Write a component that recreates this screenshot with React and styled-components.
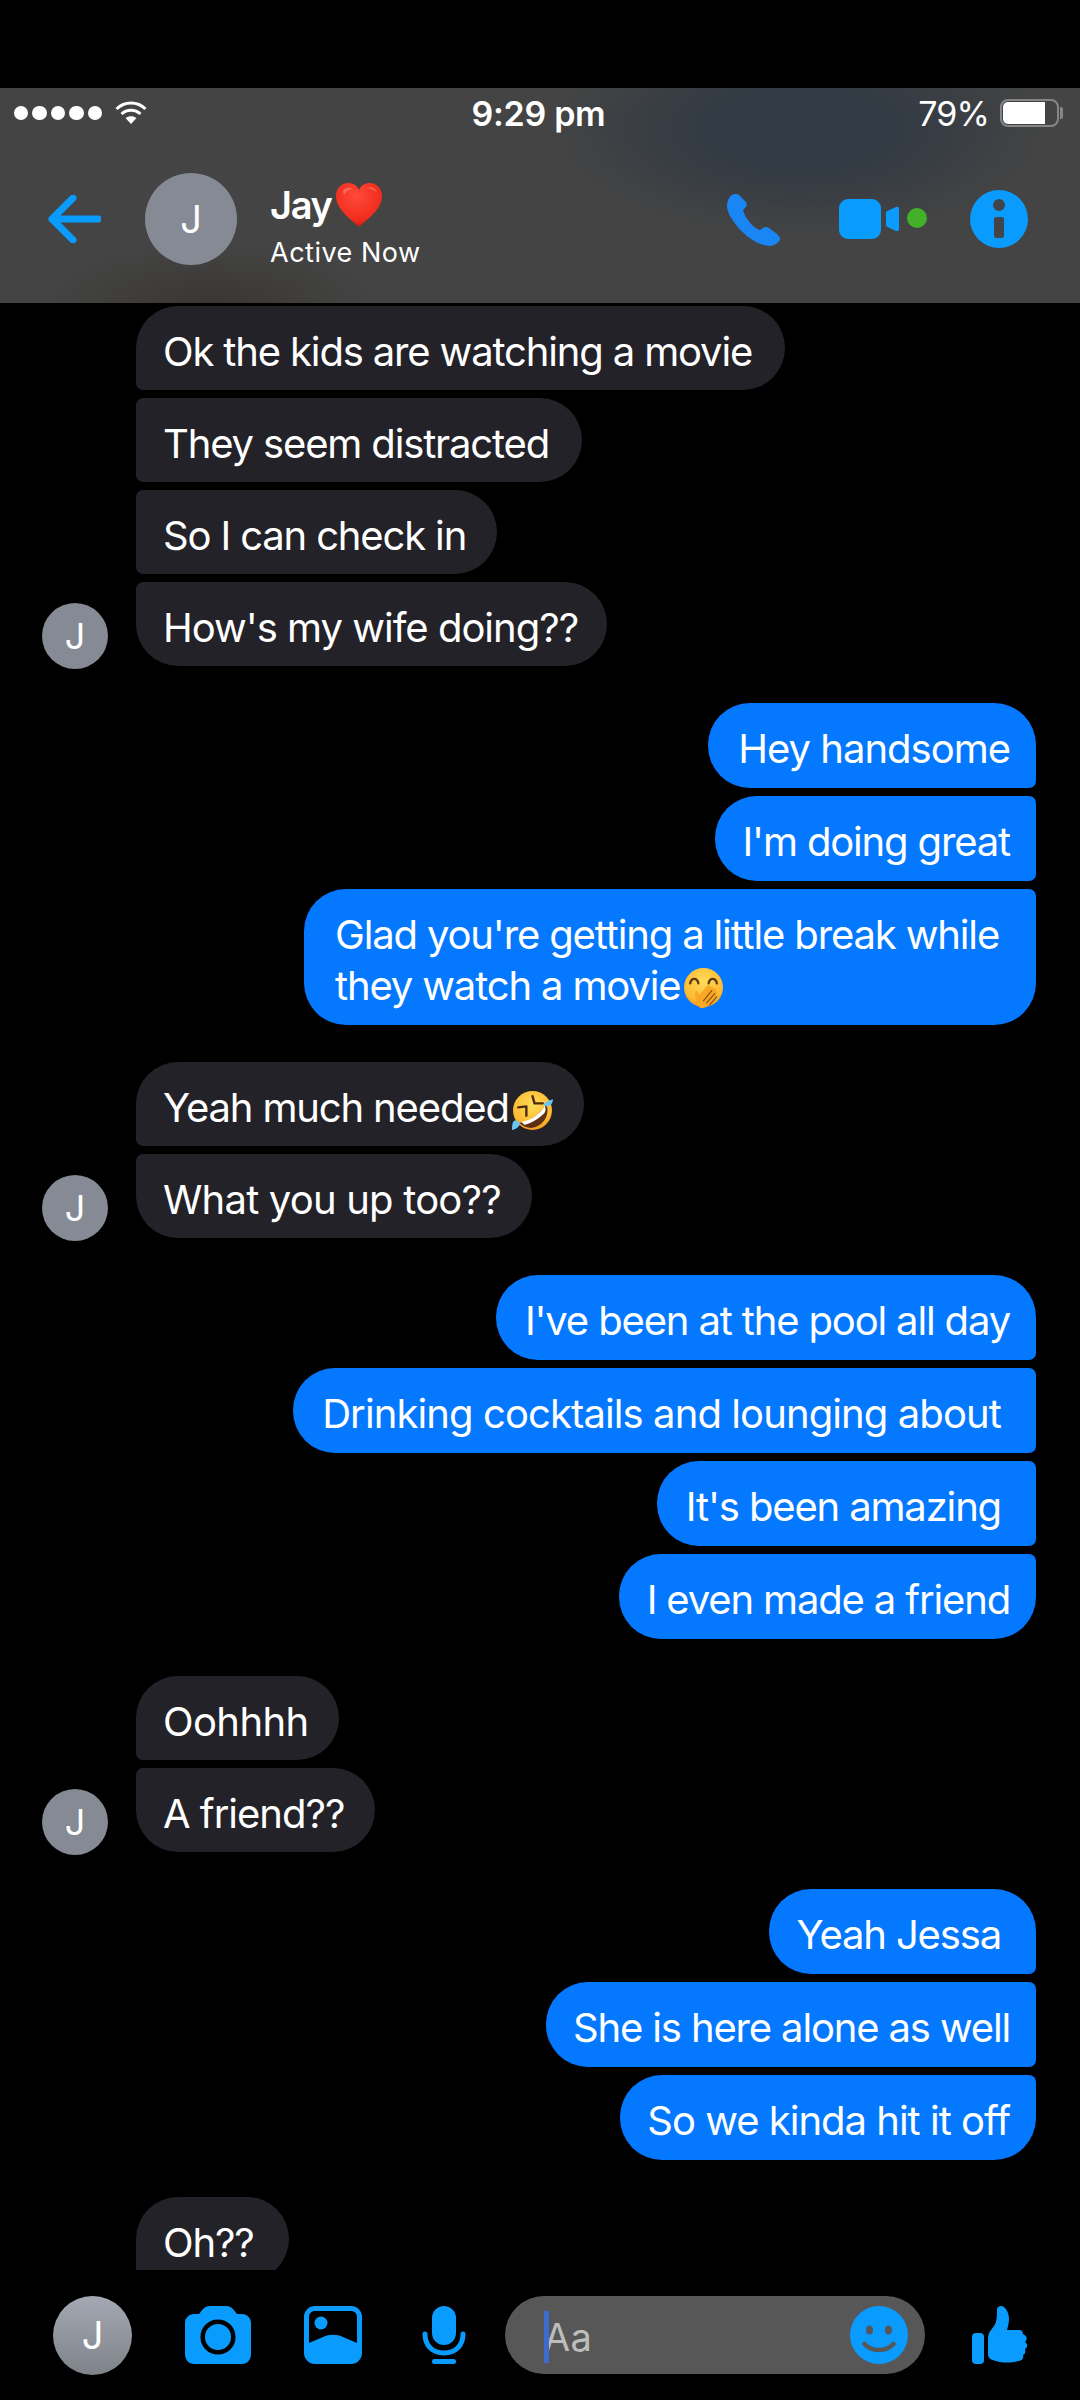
import React from "react";
import styled, { createGlobalStyle, css } from "styled-components";

const BLUE = "#0a9bff";

const GlobalStyle = createGlobalStyle`
  html, body {
    margin: 0;
    padding: 0;
    background: #000;
  }
  body {
    font-family: Inter, "Liberation Sans", sans-serif;
    color: #fff;
  }
`;

const Page = styled.div`
  width: 1080px;
  height: 2400px;
  padding-top: 88px;
  box-sizing: border-box;
  background: #000;
  overflow: hidden;
  display: flex;
  flex-direction: column;
`;

const Header = styled.header`
  height: 215px;
  flex-shrink: 0;
  background:
    radial-gradient(ellipse 250px 110px at 800px 40px, #323a43 0%, #323a43 35%, rgba(50, 58, 67, 0) 100%),
    radial-gradient(ellipse 170px 60px at 210px 215px, #393733 0%, rgba(57, 55, 51, 0) 100%),
    #444444;
`;

const StatusBar = styled.div`
  height: 50px;
  padding: 0 21px 0 14px;
  display: flex;
  align-items: center;
  font-size: 34px;
  letter-spacing: -0.9px;
`;

const StatusSide = styled.div`
  flex: 1;
  display: flex;
  align-items: center;
  justify-content: ${(p) => (p.$end ? "flex-end" : "flex-start")};
`;

const Time = styled.div`
  margin-left: 4px;
  font-weight: 600;
  letter-spacing: -0.3px;
`;

const Dots = styled.div`
  display: flex;
  gap: 4px;
  margin-right: 13px;
`;

const Dot = styled.span`
  width: 14.4px;
  height: 14.4px;
  border-radius: 50%;
  background: #fff;
`;

const Battery = styled.div`
  width: 59px;
  height: 28px;
  margin-left: 11px;
  padding: 1px;
  box-sizing: border-box;
  border: 2px solid #868686;
  border-radius: 8px;
  position: relative;

  &::after {
    content: "";
    position: absolute;
    right: -6px;
    top: 6px;
    width: 3px;
    height: 12px;
    background: #868686;
    border-radius: 0 2px 2px 0;
  }
`;

const BatteryFill = styled.div`
  height: 100%;
  background: #fff;
  border-radius: 5px 0 0 5px;
`;

const NavRow = styled.div`
  height: 162px;
  padding: 0 52px 3px 48px;
  display: flex;
  align-items: center;
`;

const BackIcon = styled.svg`
  width: 53px;
  height: 48px;
  margin-right: 44px;
`;

const Avatar = styled.div`
  width: ${(p) => p.$size}px;
  height: ${(p) => p.$size}px;
  border-radius: 50%;
  flex-shrink: 0;
  display: flex;
  align-items: center;
  justify-content: center;
  font-size: ${(p) => (p.$size > 70 ? 38 : 36)}px;
  font-weight: 400;
  color: #fff;
  background: ${(p) => (p.$gradient ? "linear-gradient(#a5a9b3, #7e8289)" : "#868a94")};
`;

const NameColumn = styled.div`
  margin-left: 33px;
  padding-top: 12px;
  display: flex;
  flex-direction: column;
`;

const NameLine = styled.div`
  height: 46px;
  display: flex;
  align-items: center;
  font-size: 38px;
  font-weight: 600;
  letter-spacing: -1.3px;
`;

const HeartIcon = styled.svg`
  width: 48px;
  height: 46px;
  margin-left: 3px;
`;

const ActiveNow = styled.div`
  margin-top: 10px;
  font-size: 27px;
  line-height: 30px;
  letter-spacing: 0.5px;
`;

const Actions = styled.div`
  margin-left: auto;
  display: flex;
  align-items: center;
  gap: 43px;
`;

const PhoneIcon = styled.svg`
  width: 53px;
  height: 53px;
  margin-right: 16px;
`;

const VideoIcon = styled.svg`
  width: 88px;
  height: 40px;
`;

const InfoIcon = styled.svg`
  width: 58px;
  height: 58px;
`;

const Messages = styled.main`
  flex: 1;
  min-height: 0;
  overflow: hidden;
  padding-top: 3px;
  display: flex;
  flex-direction: column;
  gap: 37px;
`;

const Group = styled.section`
  flex-shrink: 0;
  display: flex;
  align-items: flex-end;
  padding: ${(p) => (p.$sent ? "0 44px 0 0" : "0 0 0 42px")};
  justify-content: ${(p) => (p.$sent ? "flex-end" : "flex-start")};
`;

const AvatarSlot = styled.div`
  width: 66px;
  margin: 0 28px -3px 0;
  flex-shrink: 0;
`;

const Stack = styled.div`
  display: flex;
  flex-direction: column;
  gap: 8px;
  align-items: ${(p) => (p.$sent ? "flex-end" : "flex-start")};
`;

const BIG = 42;
const SMALL = 7;

// the corners that face the neighbour bubble in a group stay tight
const corners = ({ $sent, $pos }) => {
  const top = $pos === "first" ? BIG : SMALL;
  const bottom = $pos === "last" ? BIG : SMALL;
  return $sent
    ? css`border-radius: ${BIG}px ${top}px ${bottom}px ${BIG}px;`
    : css`border-radius: ${top}px ${BIG}px ${BIG}px ${bottom}px;`;
};

const Bubble = styled.div`
  width: ${(p) => p.$w}px;
  box-sizing: border-box;
  padding: 20px ${(p) => p.$pr || 26}px ${(p) => (p.$sent ? 14 : 13)}px ${(p) => p.$pl || 27}px;
  background: ${(p) => (p.$sent ? "#0479ff" : "#232228")};
  font-size: 40px;
  line-height: 51px;
  letter-spacing: ${(p) => p.$ls || -1.15}px;
  white-space: pre;
  text-align: ${(p) => (p.$sent && !p.$pl ? "right" : "left")};
  ${corners}
`;

const EmojiIcon = styled.svg`
  width: 41px;
  height: 41px;
  vertical-align: -9px;
  margin-left: 3px;
`;

const BottomBar = styled.footer`
  height: 130px;
  flex-shrink: 0;
  padding-left: 53px;
  display: flex;
  align-items: center;
`;

const BarIcon = styled.svg`
  height: 58px;
  flex-shrink: 0;
  margin-left: ${(p) => p.$ml}px;
  width: ${(p) => p.$w}px;
`;

const InputPill = styled.div`
  width: 420px;
  height: 78px;
  margin-left: 39px;
  padding: 3px 17px 0 39px;
  box-sizing: border-box;
  border-radius: 39px;
  background: #575757;
  display: flex;
  align-items: center;
`;

const Placeholder = styled.div`
  position: relative;
  font-size: 38px;
  letter-spacing: 0.2px;
  color: #bdbdbd;

  &::before {
    content: "";
    position: absolute;
    left: 0;
    top: -3px;
    width: 5px;
    height: 52px;
    background: #3e6bd0;
  }
`;

const SmileIcon = styled.svg`
  width: 58px;
  height: 58px;
  margin: -3px 0 0 auto;
`;

function Heart() {
  return (
    <HeartIcon viewBox="0 0 48 46">
      <defs>
        <radialGradient id="heartFill" cx="0.45" cy="0.3" r="0.8">
          <stop offset="0" stopColor="#ff4a3a" />
          <stop offset="0.7" stopColor="#f02b1c" />
          <stop offset="1" stopColor="#a80f0a" />
        </radialGradient>
      </defs>
      <path
        d="M24 45C17 38 1 28 1 14C1 6 7 1 13 1C18 1 22 3 24 8C26 3 30 1 35 1C41 1 47 6 47 14C47 28 31 38 24 45Z"
        fill="url(#heartFill)"
      />
      <path d="M8 9C10 5 15 5 18 7C14 7 11 9 9 13Z" fill="#ff8f80" opacity="0.55" />
      <path d="M32 6C36 4 41 6 42 10C39 8 36 7 32 6Z" fill="#ff8f80" opacity="0.45" />
    </HeartIcon>
  );
}

function HandFace() {
  return (
    <EmojiIcon viewBox="0 0 40 40">
      <defs>
        <radialGradient id="faceFill" cx="0.5" cy="0.35" r="0.7">
          <stop offset="0" stopColor="#ffdc5a" />
          <stop offset="0.75" stopColor="#fdb92f" />
          <stop offset="1" stopColor="#f08c1a" />
        </radialGradient>
      </defs>
      <circle cx="20" cy="19" r="19" fill="url(#faceFill)" />
      <path d="M7 15C8 9 14 9 15 15M25 15C26 9 32 9 33 15" fill="none" stroke="#5b3810" strokeWidth="2.2" strokeLinecap="round" />
      <path
        d="M12 27C11 23 13 21 14 23L16 26L23 18C25 16 27 17 26 19C28 17 30 18 29 20C31 19 33 20 32 22C33 22 34 24 33 25C30 31 26 37 20 39C15 40 12 34 12 27Z"
        fill="#f9a825"
      />
      <path d="M20 32L28 22M23 34L31 25M26 36L33 28" fill="none" stroke="#8c5310" strokeWidth="1.2" strokeLinecap="round" />
    </EmojiIcon>
  );
}

function LaughFace() {
  return (
    <EmojiIcon viewBox="0 0 40 40">
      <defs>
        <radialGradient id="laughFill" cx="0.5" cy="0.35" r="0.7">
          <stop offset="0" stopColor="#ffdc5a" />
          <stop offset="0.75" stopColor="#fdb92f" />
          <stop offset="1" stopColor="#ef8a1a" />
        </radialGradient>
      </defs>
      <circle cx="20" cy="20" r="19" fill="url(#laughFill)" />
      <path d="M6 17L14 16L14 25M20 6L22 13L30 13" fill="none" stroke="#4a2c0c" strokeWidth="2.3" strokeLinecap="round" strokeLinejoin="round" />
      <path d="M7 32C17 32 30 22 33 13C38 23 31 36 19 37C14 37 10 35 7 32Z" fill="#5e2f12" />
      <path d="M9 31C18 30 28 23 32 15C33 18 33 20 32 22C27 28 18 33 12 34Z" fill="#fff" />
      <path d="M31 14C33 11 37 10 40 9C40 13 37 16 34 16C32 16 31 15 31 14Z" fill="#6cc4f2" />
      <path d="M2 30C4 29 7 31 8 33C7 36 3 39 0 39C0 36 0 32 2 30Z" fill="#6cc4f2" />
    </EmojiIcon>
  );
}

const conversation = [
  {
    avatar: true,
    items: [
      { text: "Ok the kids are watching a movie", w: 649 },
      { text: "They seem distracted", w: 446 },
      { text: "So I can check in", w: 361 },
      { text: "How's my wife doing??", w: 471, ls: -1 },
    ],
  },
  {
    sent: true,
    items: [
      { text: "Hey handsome", w: 328, ls: -1 },
      { text: "I'm doing great", w: 321 },
      { text: "Glad you're getting a little break while\nthey watch a movie", w: 732, pl: 31, emoji: <HandFace /> },
    ],
  },
  {
    avatar: true,
    items: [
      { text: "Yeah much needed", w: 448, emoji: <LaughFace /> },
      { text: "What you up too??", w: 396, ls: -0.8 },
    ],
  },
  {
    sent: true,
    items: [
      { text: "I've been at the pool all day", w: 540 },
      { text: "Drinking cocktails and lounging about", w: 743, pr: 35, ls: -0.9 },
      { text: "It's been amazing", w: 379, pr: 35 },
      { text: "I even made a friend", w: 417 },
    ],
  },
  {
    avatar: true,
    items: [
      { text: "Oohhhh", w: 203, ls: -0.6 },
      { text: "A friend??", w: 239, ls: -1 },
    ],
  },
  {
    sent: true,
    items: [
      { text: "Yeah Jessa", w: 267, pr: 35 },
      { text: "She is here alone as well", w: 490 },
      { text: "So we kinda hit it off", w: 416, ls: -1 },
    ],
  },
  {
    items: [{ text: "Oh??", w: 153 }],
  },
];

function position(index, total) {
  if (index === 0) return "first";
  return index === total - 1 ? "last" : "mid";
}

function MessageGroup({ group }) {
  const { sent, avatar, items } = group;
  return (
    <Group $sent={sent}>
      {!sent && <AvatarSlot>{avatar && <Avatar $size={66}>J</Avatar>}</AvatarSlot>}
      <Stack $sent={sent}>
        {items.map((m, i) => (
          <Bubble key={m.text} $sent={sent} $pos={position(i, items.length)} $w={m.w} $pr={m.pr} $pl={m.pl} $ls={m.ls}>
            {m.text}
            {m.emoji}
          </Bubble>
        ))}
      </Stack>
    </Group>
  );
}

export default function App() {
  return (
    <Page>
      <GlobalStyle />
      <Header>
        <StatusBar>
          <StatusSide>
            <Dots>
              <Dot />
              <Dot />
              <Dot />
              <Dot />
              <Dot />
            </Dots>
            <svg width="32" height="24" viewBox="0 0 32 24">
              <path d="M1.5 8C9.5 0 22.5 0 30.5 8M6.5 13C12 8 20 8 25.5 13" fill="none" stroke="#fff" strokeWidth="3" />
              <path d="M10.5 17C14 14.8 18 14.8 21.5 17L16 23Z" fill="#fff" />
            </svg>
          </StatusSide>
          <Time>9:29 pm</Time>
          <StatusSide $end>
            79%
            <Battery>
              <BatteryFill style={{ width: "79%" }} />
            </Battery>
          </StatusSide>
        </StatusBar>
        <NavRow>
          <BackIcon viewBox="0 0 53 48">
            <path d="M50 24H4M25 3L4 24L25 45" fill="none" stroke={BLUE} strokeWidth="7" strokeLinecap="round" strokeLinejoin="round" />
          </BackIcon>
          <Avatar $size={92}>J</Avatar>
          <NameColumn>
            <NameLine>
              Jay
              <Heart />
            </NameLine>
            <ActiveNow>Active Now</ActiveNow>
          </NameColumn>
          <Actions>
            <PhoneIcon viewBox="0 0 53 53">
              <path
                d="M8 1C4 1 0 6 0 13C0 26 24 53 43 53C47 53 53 49 53 46C53 44 51 42 50 41L42 35C40 33.5 38 33.5 36 35L33 37C26 35 18 25 16 17L19 14C20 12 20 11 19 9L13 3C11 1 10 1 8 1Z"
                fill="#1a85f5"
              />
            </PhoneIcon>
            <VideoIcon viewBox="0 0 88 40">
              <rect width="42" height="40" rx="9" fill={BLUE} />
              <path d="M47 14C47 13 47.5 12.5 48.5 12L57 8C59 7.5 60 8.5 60 10V30C60 31.5 59 32.5 57 32L48.5 28C47.5 27.5 47 27 47 26Z" fill={BLUE} />
              <circle cx="78" cy="19" r="10" fill="#43b02a" />
            </VideoIcon>
            <InfoIcon viewBox="0 0 58 58">
              <circle cx="29" cy="29" r="29" fill={BLUE} />
              <circle cx="29" cy="15" r="6" fill="#41454a" />
              <rect x="24" y="27" width="10" height="21" rx="2.5" fill="#41454a" />
            </InfoIcon>
          </Actions>
        </NavRow>
      </Header>

      <Messages>
        {conversation.map((group) => (
          <MessageGroup key={group.items[0].text} group={group} />
        ))}
      </Messages>

      <BottomBar>
        <Avatar $size={79} $gradient>J</Avatar>
        <BarIcon $ml={53} $w={66} viewBox="0 0 66 58">
          <path
            d="M14 8L18 3C20 1 22 0 25 0H41C44 0 46 1 48 3L52 8H57C62 8 66 12 66 17V48C66 54 62 58 57 58H9C4 58 0 54 0 48V17C0 12 4 8 9 8Z"
            fill={BLUE}
          />
          <circle cx="33" cy="31" r="15.3" fill="none" stroke="#000" strokeWidth="4.5" />
        </BarIcon>
        <BarIcon $ml={53} $w={58} viewBox="0 0 58 58">
          <rect width="58" height="58" rx="11" fill={BLUE} />
          <path d="M5 37V11C5 7.5 7.5 5 11 5H47C50.5 5 53 7.5 53 11V37L39 31C33 28 25 28 19 31Z" fill="#000" />
          <circle cx="17" cy="17" r="6.5" fill={BLUE} />
        </BarIcon>
        <BarIcon $ml={60} $w={44} viewBox="0 0 44 58">
          <rect x="10" width="24" height="39" rx="12" fill={BLUE} />
          <path d="M3 28C3 40 11 47 22 47C33 47 41 40 41 28" fill="none" stroke={BLUE} strokeWidth="5" strokeLinecap="round" />
          <rect x="10" y="53" width="24" height="5" rx="2.5" fill={BLUE} />
        </BarIcon>
        <InputPill>
          <Placeholder>Aa</Placeholder>
          <SmileIcon viewBox="0 0 58 58">
            <circle cx="29" cy="29" r="29" fill={BLUE} />
            <ellipse cx="19.5" cy="24" rx="3.5" ry="4.5" fill="#575757" />
            <ellipse cx="38.5" cy="24" rx="3.5" ry="4.5" fill="#575757" />
            <path d="M14.5 38C22 46 36 46 43.5 38" fill="none" stroke="#575757" strokeWidth="4.5" strokeLinecap="round" />
          </SmileIcon>
        </InputPill>
        <BarIcon $ml={47} $w={56} viewBox="0 0 56 58">
          <rect y="27" width="12" height="31" rx="4" fill={BLUE} />
          <path
            d="M16 33C16 27 19 24 22 20C25 16 25 10 25 4C25 1 27 0 29 0C33 0 37 6 37 13C37 17 36 20 35 24H47C50 24 51 26 51 28L54 30C55 32 55 34 53 36C56 38 56 41 53 43C54 46 53 48 51 49C52 52 50 55 46 55C40 57 30 57 24 55C19 54 16 52 16 48Z"
            fill={BLUE}
          />
        </BarIcon>
      </BottomBar>
    </Page>
  );
}
